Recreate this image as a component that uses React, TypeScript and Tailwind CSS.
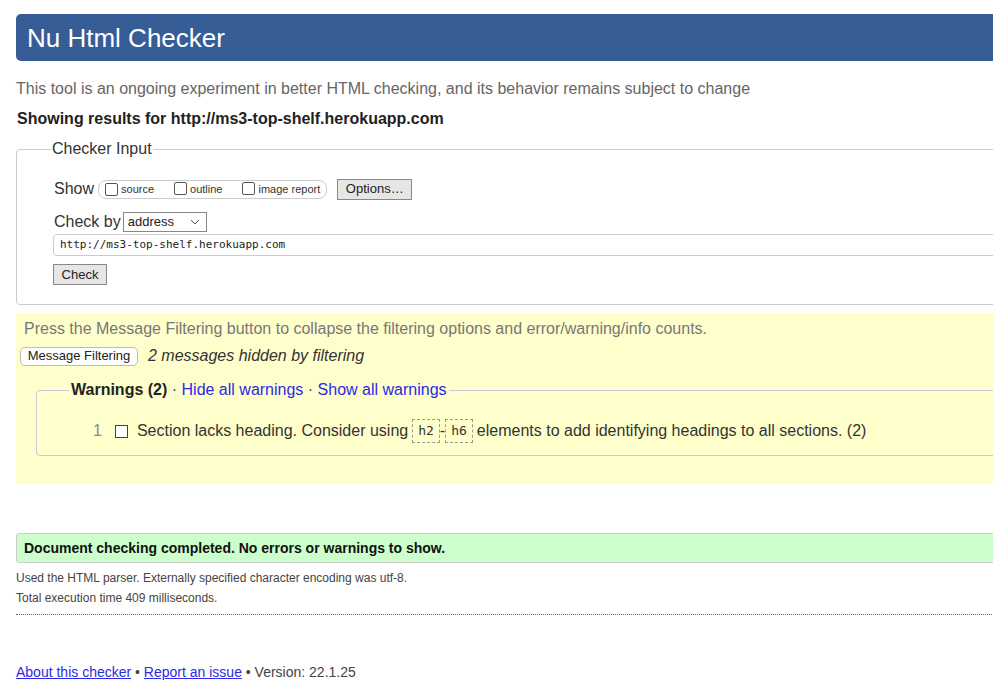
import React from "react";

function Box() {
  return <span className="inline-block w-[13px] h-[13px] border border-[#555] bg-white rounded-[2px] align-[-2px] mr-[3px]" />;
}

export default function App() {
  return (
    <div className="w-[993px] h-[691px] overflow-hidden bg-white text-[#333] font-['Liberation_Sans',Arial,sans-serif]">
      <div className="w-[1000px] ml-4 pt-[14px]">
        <div className="h-[47px] bg-[#365d95] rounded-l-[5px] flex items-center pl-[11px]">
          <h1 className="text-white text-[26px] leading-none">Nu Html Checker</h1>
        </div>
        <p className="mt-[18px] text-[16px] leading-[20px] text-[#666]">
          This tool is an ongoing experiment in better HTML checking, and its behavior remains subject to change
        </p>
        <p className="mt-[10px] ml-[1px] text-[16px] leading-[20px] font-bold text-[#222]">
          Showing results for http://ms3-top-shelf.herokuapp.com
        </p>
        <fieldset className="mt-[10px] border border-[#ccc] rounded-[4px] h-[166px] pl-[36px] pr-0 pt-[10px]">
          <legend className="ml-[-2px] px-[1px] text-[16px] leading-[20px] text-[#333]">Checker Input</legend>
          <div className="flex items-center h-[22px] mt-[9px] ml-[1px]">
            <span className="text-[16px] text-[#333]">Show</span>
            <span className="ml-[4px] h-[19px] border border-[#ccc] rounded-[8px] flex items-center pl-[6px] pr-[6px] text-[11px] text-[#333]">
              <Box />source
              <span className="ml-[20px]"><Box /></span>outline
              <span className="ml-[20px]"><Box /></span>image report
            </span>
            <span className="ml-[10px] w-[75px] h-[21px] border border-[#888] bg-[#e6e6e6] flex items-center justify-center text-[13px] text-[#222]">Options…</span>
          </div>
          <div className="flex items-center h-[20px] mt-[12px] ml-[1px]">
            <span className="text-[16px] text-[#333]">Check by</span>
            <span className="ml-[2px] w-[84px] h-[20px] border border-[#888] bg-white flex items-center justify-between pl-[4px] pr-[6px] text-[13px] text-[#222]">
              address
              <svg width="10" height="6" viewBox="0 0 10 6" fill="none" stroke="#555" strokeWidth="1"><path d="M1 1l4 4 4-4" /></svg>
            </span>
          </div>
          <div className="mt-[2px] h-[22px] border border-[#ccc] rounded-l-[4px] flex items-center pl-[6px] font-['DejaVu_Sans_Mono',monospace] text-[11px] text-[#222]">
            http://ms3-top-shelf.herokuapp.com
          </div>
          <div className="mt-[8px] w-[54px] h-[21px] border border-[#888] bg-[#e6e6e6] flex items-center justify-center text-[13px] text-[#222]">Check</div>
        </fieldset>
        <div className="mt-[8px] h-[171px] bg-[#ffffcc] pt-[7px]">
          <p className="ml-[8px] text-[16px] leading-[18px] text-[#777]">
            Press the Message Filtering button to collapse the filtering options and error/warning/info counts.
          </p>
          <div className="flex items-center mt-[6px] ml-[4px]">
            <span className="h-[19px] w-[118px] border border-[#bbb] rounded-[5px] bg-white flex items-center justify-center text-[13px] text-[#222]">Message Filtering</span>
            <span className="ml-[10px] italic text-[16px] text-[#333]">2 messages hidden by filtering</span>
          </div>
          <fieldset className="mt-[12px] ml-[20px] border border-[#c8c8d8] rounded-l-[4px] h-[76px] pl-[32px] pr-0">
            <legend className="px-[2px] text-[16px] leading-[20px]">
              <b className="text-[#222]">Warnings (2)</b>
              <span className="text-[#444]"> · </span>
              <span className="text-[#2a2ae8]">Hide all warnings</span>
              <span className="text-[#444]"> · </span>
              <span className="text-[#2a2ae8]">Show all warnings</span>
            </legend>
            <div className="flex items-center mt-[19px] text-[16px] text-[#333]">
              <span className="ml-[24px] text-[#888]">1</span>
              <span className="ml-[13px] inline-block w-[13px] h-[13px] border border-[#444] bg-white" />
              <span className="ml-[9px]">Section lacks heading. Consider using</span>
              <span className="ml-[4px] border border-dashed border-[#999] px-[5px] h-[24px] flex items-center font-['DejaVu_Sans_Mono',monospace] text-[13px]">h2</span>
              <span>-</span>
              <span className="border border-dashed border-[#999] px-[5px] h-[24px] flex items-center font-['DejaVu_Sans_Mono',monospace] text-[13px]">h6</span>
              <span className="ml-[4px]">elements to add identifying headings to all sections. (2)</span>
            </div>
          </fieldset>
        </div>
        <div className="mt-[49px] h-[30px] bg-[#ccffcc] border border-[#ccc] rounded-l-[3px] flex items-center pl-[7px] text-[14px] font-bold text-[#111]">
          Document checking completed. No errors or warnings to show.
        </div>
        <p className="mt-[5px] text-[12px] leading-[20px] text-[#444]">Used the HTML parser. Externally specified character encoding was utf-8.</p>
        <p className="text-[12px] leading-[20px] text-[#444]">Total execution time 409 milliseconds.</p>
        <div className="mt-[6px] border-t border-dotted border-[#666]" />
        <p className="mt-[47px] text-[14px] leading-[20px] text-[#444]">
          <span className="text-[#2a2ae8] underline">About this checker</span> • <span className="text-[#2a2ae8] underline">Report an issue</span> • Version: 22.1.25
        </p>
      </div>
    </div>
  );
}
